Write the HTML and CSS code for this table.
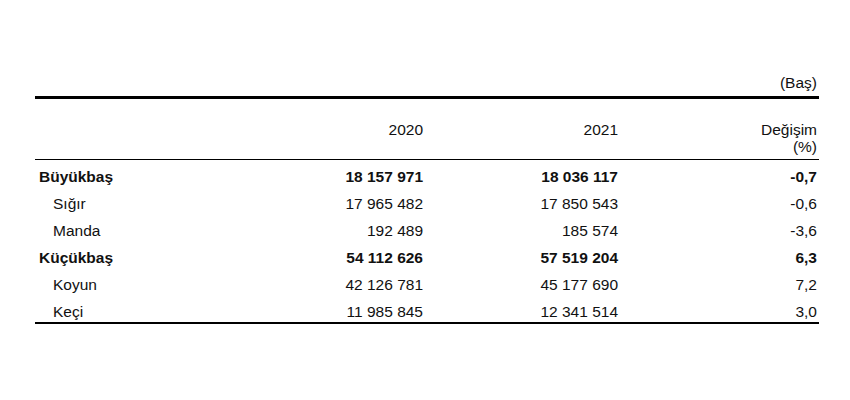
FILE: index.html
```html
<!DOCTYPE html>
<html lang="tr">
<head>
<meta charset="utf-8">
<title>Hayvan sayıları</title>
<link rel="stylesheet" href="styles.css">
</head>
<body>
<div class="wrap">
  <div class="unit">(Baş)</div>
  <table class="stats">
    <colgroup>
      <col class="c-label">
      <col class="c-y1">
      <col class="c-y2">
      <col class="c-chg">
    </colgroup>
    <thead>
      <tr>
        <th class="label"></th>
        <th>2020</th>
        <th>2021</th>
        <th class="chg">Değişim<br>(%)</th>
      </tr>
    </thead>
    <tbody>
      <tr class="group first">
        <td class="label">Büyükbaş</td>
        <td>18 157 971</td>
        <td>18 036 117</td>
        <td class="chg">-0,7</td>
      </tr>
      <tr class="item">
        <td class="label">Sığır</td>
        <td>17 965 482</td>
        <td>17 850 543</td>
        <td class="chg">-0,6</td>
      </tr>
      <tr class="item">
        <td class="label">Manda</td>
        <td>192 489</td>
        <td>185 574</td>
        <td class="chg">-3,6</td>
      </tr>
      <tr class="group">
        <td class="label">Küçükbaş</td>
        <td>54 112 626</td>
        <td>57 519 204</td>
        <td class="chg">6,3</td>
      </tr>
      <tr class="item">
        <td class="label">Koyun</td>
        <td>42 126 781</td>
        <td>45 177 690</td>
        <td class="chg">7,2</td>
      </tr>
      <tr class="item last">
        <td class="label">Keçi</td>
        <td>11 985 845</td>
        <td>12 341 514</td>
        <td class="chg">3,0</td>
      </tr>
    </tbody>
  </table>
</div>
</body>
</html>
```
FILE: styles.css
```css
html, body {
  margin: 0;
  padding: 0;
  background: #ffffff;
}

body {
  font-family: "Liberation Sans", Arial, sans-serif;
  font-size: 15.5px;
  color: #111111;
}

.wrap {
  width: 784px;
  margin-left: 35px;
  padding-top: 74px;
}

.unit {
  text-align: right;
  line-height: 17px;
  padding-right: 2px;
  margin-bottom: 5px;
}

.stats {
  width: 100%;
  border-collapse: collapse;
  table-layout: fixed;
  border-top: 3px solid #000000;
  border-bottom: 2px solid #000000;
}

.c-label { width: 290px; }
.c-y1 { width: 98px; }
.c-y2 { width: 195px; }
.c-chg { width: 201px; }

.stats th {
  font-weight: normal;
  text-align: right;
  vertical-align: top;
  line-height: 17px;
  padding: 22px 0 4px 0;
  border-bottom: 1px solid #000000;
}

.stats td {
  text-align: right;
  line-height: 17px;
  padding: 5px 0 5px 0;
  white-space: nowrap;
}

.stats .chg {
  padding-right: 2px;
}

.stats td.label {
  text-align: left;
  padding-left: 18px;
}

.stats tr.group td {
  font-weight: bold;
}

.stats tr.group td.label {
  padding-left: 4px;
}

.stats tr.first td {
  padding-top: 8px;
}

.stats tr.last td {
  padding-bottom: 2px;
}
```
